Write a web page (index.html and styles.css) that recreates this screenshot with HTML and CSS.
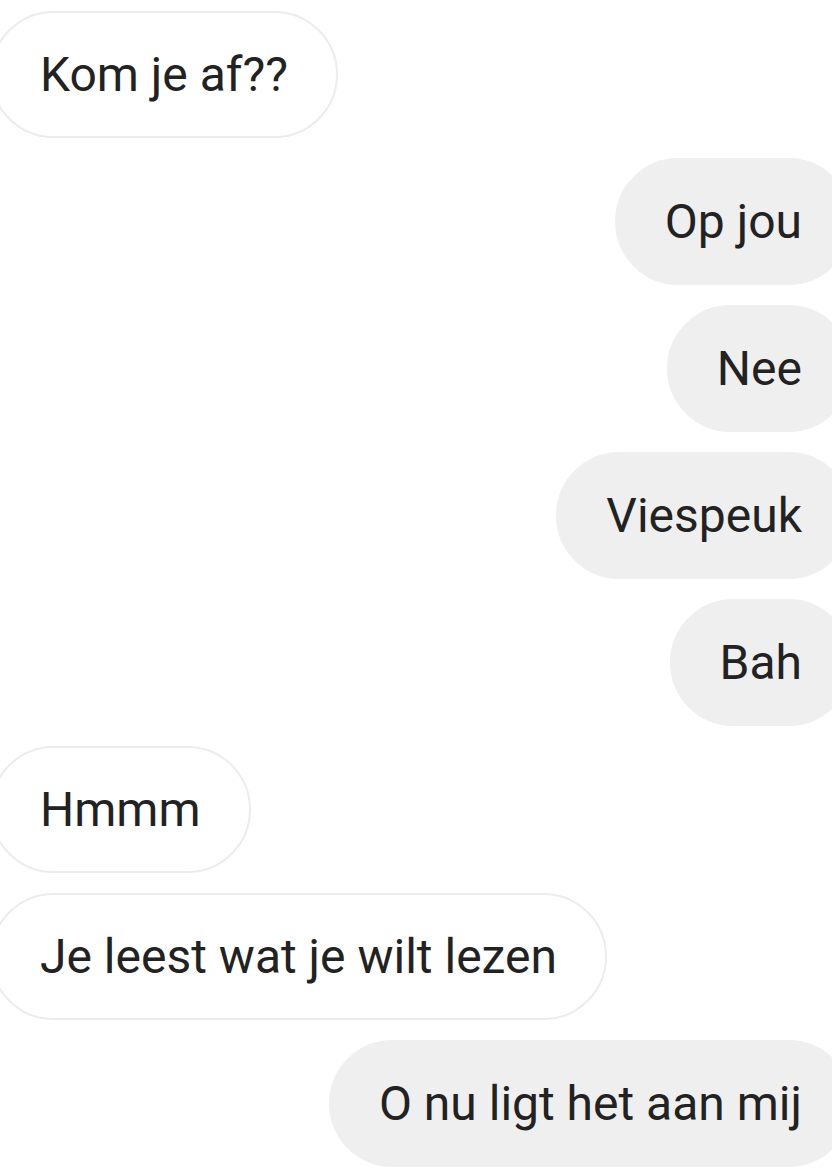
FILE: index.html
```html
<!DOCTYPE html>
<html lang="nl">
<head>
<meta charset="utf-8">
<title>Chat</title>
<link rel="stylesheet" href="styles.css">
</head>
<body>
<div class="chat">
  <div class="row in"><div class="bubble">Kom je af??</div></div>
  <div class="row out"><div class="bubble">Op jou</div></div>
  <div class="row out"><div class="bubble">Nee</div></div>
  <div class="row out"><div class="bubble">Viespeuk</div></div>
  <div class="row out"><div class="bubble">Bah</div></div>
  <div class="row in"><div class="bubble">Hmmm</div></div>
  <div class="row in"><div class="bubble">Je leest wat je wilt lezen</div></div>
  <div class="row out"><div class="bubble">O nu ligt het aan mij</div></div>
</div>
</body>
</html>
```
FILE: styles.css
```css
html, body {
  margin: 0;
  padding: 0;
  background: #ffffff;
  overflow: hidden;
}
.chat {
  display: flex;
  flex-direction: column;
  gap: 20px;
  padding-top: 11px;
  font-family: Roboto, "Liberation Sans", sans-serif;
  font-size: 48px;
  color: #222222;
}
.row {
  display: flex;
}
.row.in {
  justify-content: flex-start;
}
.row.out {
  justify-content: flex-end;
}
.bubble {
  line-height: 57px;
  padding: 33px 48px;
  border: 2px solid transparent;
  border-radius: 64px;
  white-space: nowrap;
}
.in .bubble {
  background: #ffffff;
  border-color: #ececec;
  margin-left: -10px;
}
.out .bubble {
  background: #efefef;
  border-color: #efefef;
  margin-right: -20px;
}
```
